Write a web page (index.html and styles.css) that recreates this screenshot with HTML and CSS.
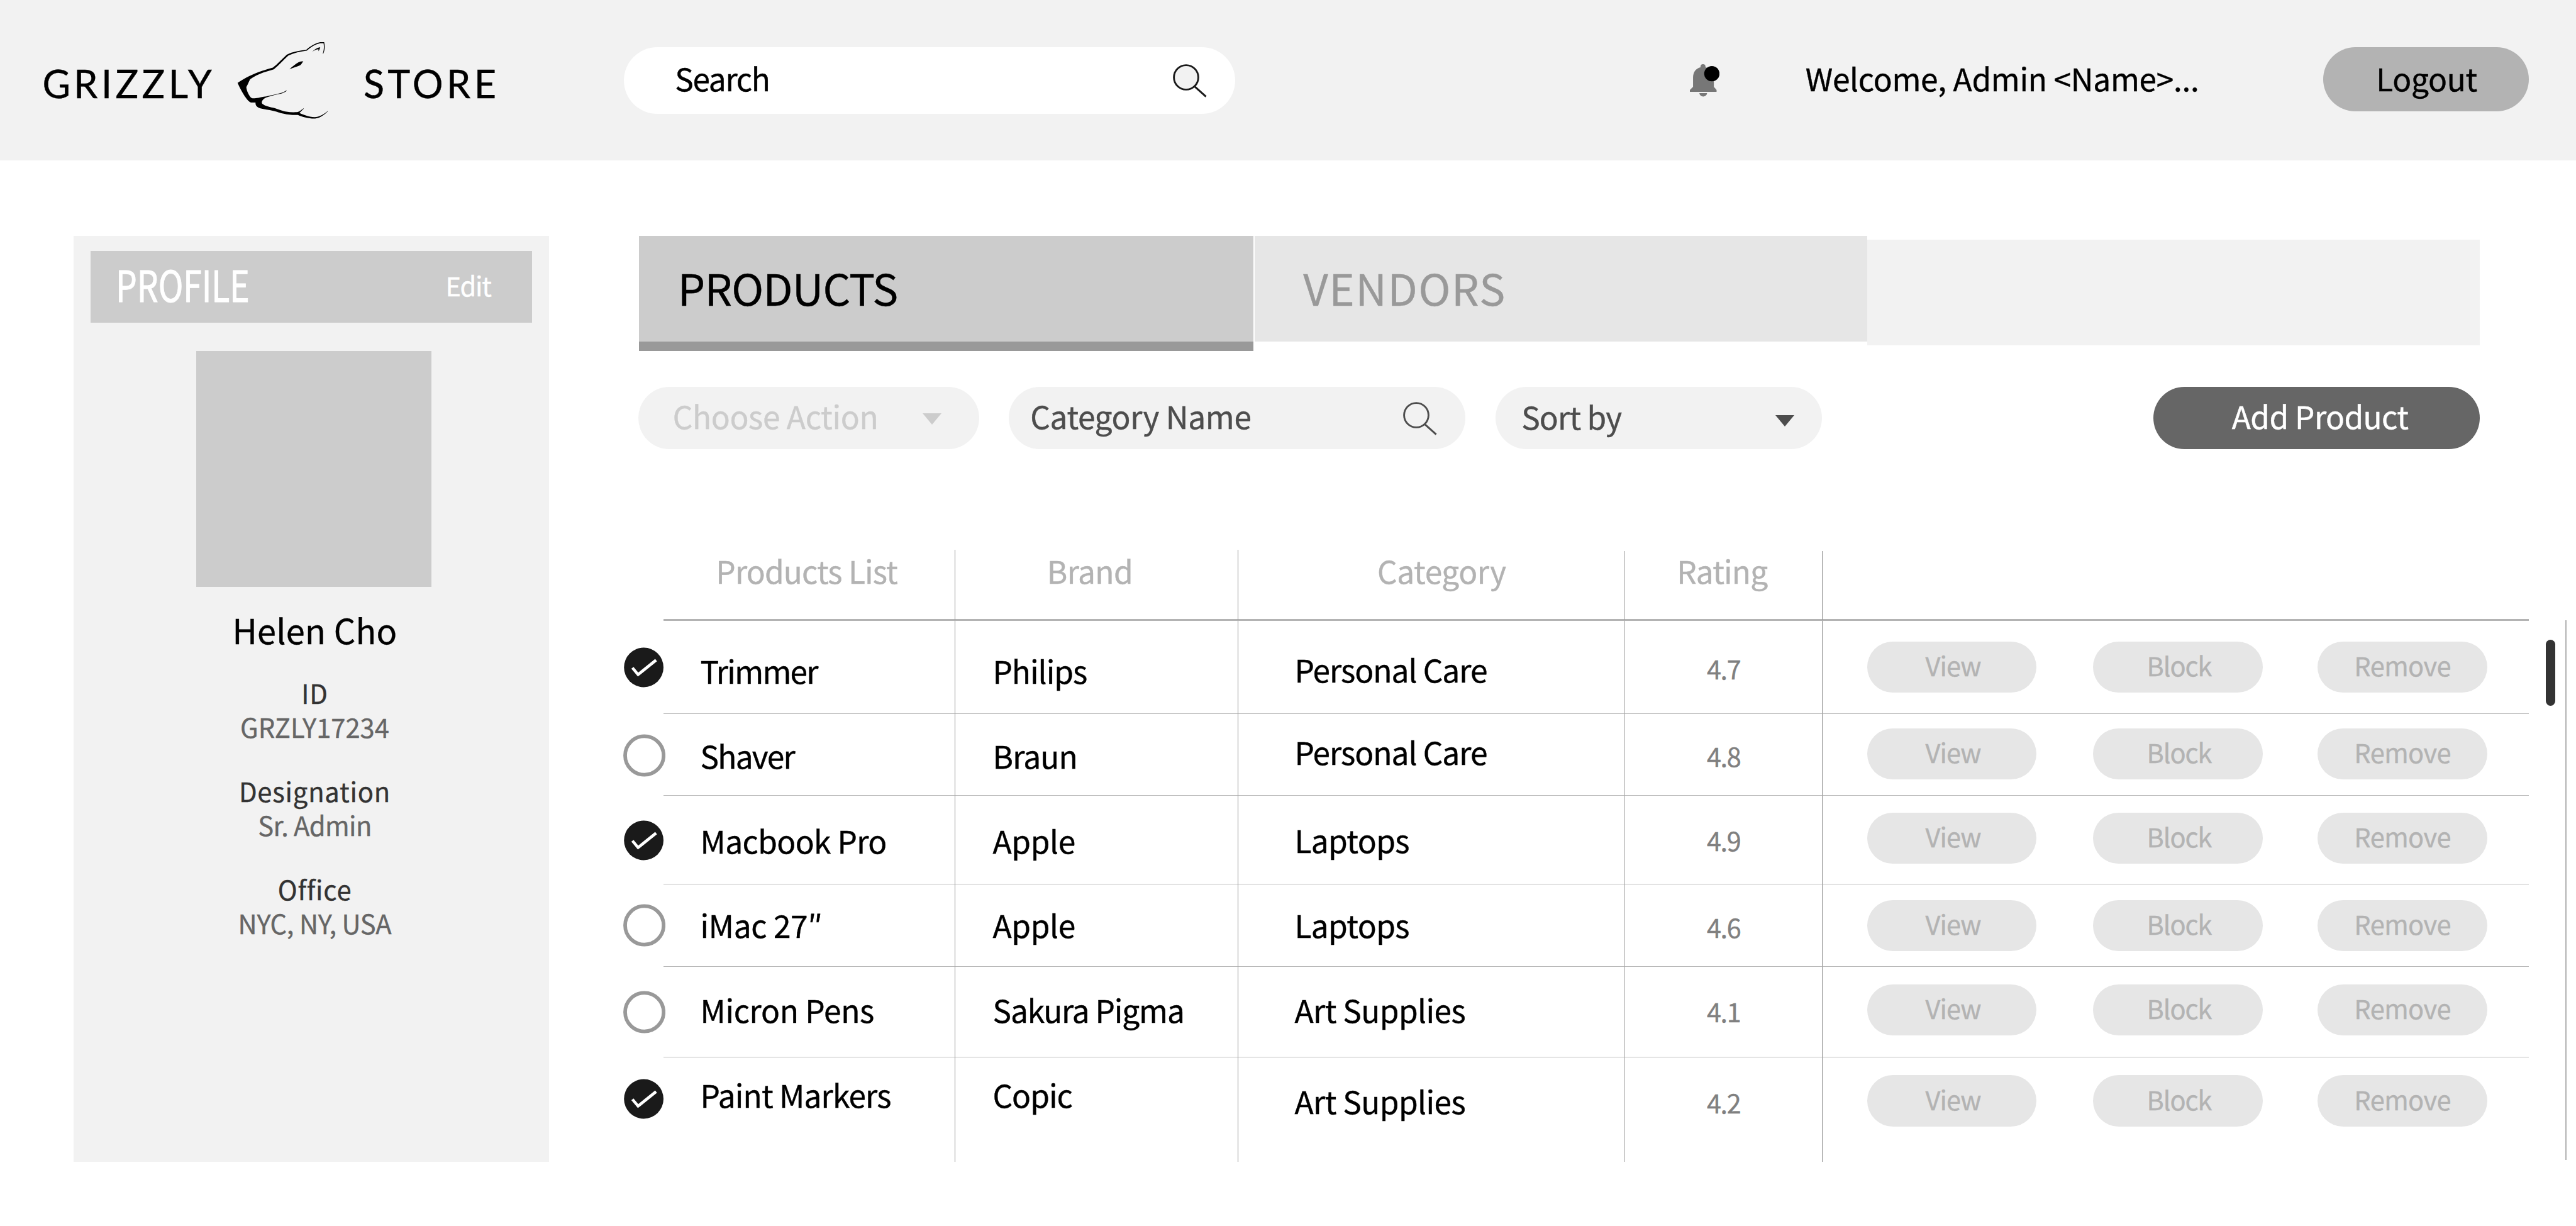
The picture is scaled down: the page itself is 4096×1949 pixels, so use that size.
FILE: index.html
```html
<!DOCTYPE html>
<html lang="en">
<head>
<meta charset="utf-8">
<title>Grizzly Store</title>
<link rel="stylesheet" href="styles.css">
</head>
<body>
<svg class="defs" width="0" height="0" aria-hidden="true">
  <symbol id="magnifier" viewBox="0 0 54 53">
    <circle cx="21" cy="21" r="19.4" stroke="currentColor" stroke-width="2.9"/>
    <path d="M33.6 34.6 52.6 51.6" stroke="currentColor" stroke-width="3" fill="none"/>
  </symbol>
  <symbol id="caret" viewBox="0 0 30 18"><path d="M0 0H30L15 18Z" fill="currentColor"/></symbol>
  <symbol id="checked" viewBox="0 0 68 68">
    <circle cx="33.6" cy="34" r="31.4" fill="#1a1a1a"/>
    <path d="M15.6 34.6 24.6 45.4 53.2 22.4" fill="none" stroke="#fff" stroke-width="4.6"/>
  </symbol>
  <symbol id="unchecked" viewBox="0 0 68 68">
    <circle cx="34.6" cy="34" r="30.6" fill="#fff" stroke="#999" stroke-width="5.8"/>
  </symbol>
</svg>

<header class="topbar">
  <div class="logo">
    <span class="logo-word logo-first">GRIZZLY</span>
    <svg class="bear" viewBox="0 0 780 630" aria-hidden="true">
      <path d="M74 341C120 310 180 280 235 262C262 252 290 246 308 240C340 214 372 180 400 154C440 134 485 127 529 122C556 97 590 78 622 71H648C654 98 653 122 642 148L639 147C647 122 648 99 644 78H622C592 84 562 101 533 127C490 133 448 142 411 159C380 187 348 222 314 251C292 258 268 264 245 272C215 284 180 299 157 317C147 336 143 350 132 368C133 392 149 424 162 438C168 444 180 444 195 442C222 439 240 432 265 430C300 424 335 415 366 407C380 402 388 396 398 391L400 393C390 401 378 408 368 411C332 418 285 429 255 442C232 458 230 474 241 482C258 494 278 500 298 503C330 508 360 524 398 532C420 536 445 536 470 535C487 531 497 520 511 510L513 512C502 521 494 532 484 540C510 553 545 566 585 568C622 566 650 545 670 528L672 530C648 554 620 576 588 577C545 578 505 567 474 553C450 556 410 552 380 545C350 540 335 530 310 526C280 520 250 517 225 510C200 500 192 490 193 471H163C150 467 135 448 122 430C102 400 88 372 74 341Z"/>
      <path d="M418 251C435 233 460 214 480 203C490 199 500 197 510 198C502 206 500 216 489 224C465 234 440 240 418 251Z"/>
      <path d="M568 137C582 120 600 108 622 104C619 114 616 123 611 131L610 118C593 119 580 127 568 137Z"/>
    </svg>
    <span class="logo-word logo-second">STORE</span>
  </div>
  <div class="search">
    <span class="search-text">Search</span>
    <svg class="magnifier on-white" aria-hidden="true"><use href="#magnifier"/></svg>
  </div>
  <svg class="bell" viewBox="3734 142 66 72" aria-hidden="true">
    <path fill="#777" d="M3734 203V199L3741 192V172C3741 159 3748 151 3757.5 149V147.500a5.500 5.500 0 0 1 11 0V149C3779 151 3787 159 3787 172V192L3793 199V203ZM3755 206H3772A8.500 7.500 0 0 1 3755 206Z"/>
    <circle cx="3782.600" cy="163" r="17"/>
  </svg>
  <span class="welcome">Welcome, Admin &lt;Name&gt;...</span>
  <button class="logout">Logout</button>
</header>

<div class="page">
  <aside class="profile">
    <div class="profile-bar">
      <span class="profile-title">PROFILE</span>
      <a class="profile-edit">Edit</a>
    </div>
    <div class="avatar"></div>
    <div class="profile-info">
      <h2 class="profile-name">Helen Cho</h2>
      <dl class="fact"><dt>ID</dt><dd class="ls-none">GRZLY17234</dd></dl>
      <dl class="fact"><dt>Designation</dt><dd class="ls-mid">Sr. Admin</dd></dl>
      <dl class="fact"><dt>Office</dt><dd class="ls-light">NYC, NY, USA</dd></dl>
    </div>
  </aside>

  <main class="main">
    <nav class="tabs">
      <a class="tab tab-active">PRODUCTS</a>
      <a class="tab tab-vendors">VENDORS</a>
      <span class="tab-rest"></span>
    </nav>

    <div class="filters">
      <div class="pill pill-action"><span class="ls-light">Choose Action</span><svg class="caret" aria-hidden="true"><use href="#caret"/></svg></div>
      <div class="pill pill-category"><span class="ls-light">Category Name</span><svg class="magnifier" aria-hidden="true"><use href="#magnifier"/></svg></div>
      <div class="pill pill-sort"><span>Sort by</span><svg class="caret" aria-hidden="true"><use href="#caret"/></svg></div>
      <button class="pill pill-add"><span class="ls-mid">Add Product</span></button>
    </div>

    <div class="list">
      <div class="table">
        <div class="row head">
          <div class="cell"><span>Products List</span></div>
          <div class="cell"><span class="ls-mid">Brand</span></div>
          <div class="cell low"><span class="ls-light">Category</span></div>
          <div class="cell low"><span>Rating</span></div>
          <div class="cell"></div>
        </div>

        <div class="row r1">
          <svg class="check" aria-hidden="true"><use href="#checked"/></svg>
          <div class="cell name"><span class="ls-tightest">Trimmer</span></div>
          <div class="cell brand"><span class="ls-tight">Philips</span></div>
          <div class="cell category"><span class="ls-tight">Personal Care</span></div>
          <div class="cell rating">4.7</div>
          <div class="cell actions"><button class="act view">View</button><button class="act block">Block</button><button class="act remove">Remove</button></div>
        </div>

        <div class="row r2">
          <svg class="check" aria-hidden="true"><use href="#unchecked"/></svg>
          <div class="cell name"><span class="ls-tightest">Shaver</span></div>
          <div class="cell brand"><span>Braun</span></div>
          <div class="cell category"><span class="ls-tight">Personal Care</span></div>
          <div class="cell rating">4.8</div>
          <div class="cell actions"><button class="act view">View</button><button class="act block">Block</button><button class="act remove">Remove</button></div>
        </div>

        <div class="row r3">
          <svg class="check" aria-hidden="true"><use href="#checked"/></svg>
          <div class="cell name"><span class="ls-mid">Macbook Pro</span></div>
          <div class="cell brand"><span class="ls-light">Apple</span></div>
          <div class="cell category"><span class="ls-mid">Laptops</span></div>
          <div class="cell rating">4.9</div>
          <div class="cell actions"><button class="act view">View</button><button class="act block">Block</button><button class="act remove">Remove</button></div>
        </div>

        <div class="row r4">
          <svg class="check" aria-hidden="true"><use href="#unchecked"/></svg>
          <div class="cell name"><span class="ls-light">iMac 27″</span></div>
          <div class="cell brand"><span class="ls-light">Apple</span></div>
          <div class="cell category"><span class="ls-mid">Laptops</span></div>
          <div class="cell rating">4.6</div>
          <div class="cell actions"><button class="act view">View</button><button class="act block">Block</button><button class="act remove">Remove</button></div>
        </div>

        <div class="row r5">
          <svg class="check" aria-hidden="true"><use href="#unchecked"/></svg>
          <div class="cell name"><span class="ls-light">Micron Pens</span></div>
          <div class="cell brand"><span class="ls-tighter">Sakura Pigma</span></div>
          <div class="cell category"><span class="ls-mid">Art Supplies</span></div>
          <div class="cell rating">4.1</div>
          <div class="cell actions"><button class="act view">View</button><button class="act block">Block</button><button class="act remove">Remove</button></div>
        </div>

        <div class="row r6">
          <svg class="check" aria-hidden="true"><use href="#checked"/></svg>
          <div class="cell name"><span>Paint Markers</span></div>
          <div class="cell brand"><span class="ls-tight">Copic</span></div>
          <div class="cell category"><span class="ls-mid">Art Supplies</span></div>
          <div class="cell rating">4.2</div>
          <div class="cell actions"><button class="act view">View</button><button class="act block">Block</button><button class="act remove">Remove</button></div>
        </div>
      </div>
      <div class="scrollbar"><span class="thumb"></span></div>
    </div>
  </main>
</div>
</body>
</html>
```
FILE: styles.css
```css
* { box-sizing: border-box; margin: 0; padding: 0; }

body {
  width: 4096px;
  height: 1949px;
  overflow: hidden;
  background: #fff;
  color: #000;
  font: 49.6px/60px "Noto Sans CJK SC", "Noto Sans", sans-serif;
  letter-spacing: -0.85px;
  white-space: nowrap;
  -webkit-text-stroke: 0.4px currentColor;
}

button { border: 0; font: inherit; letter-spacing: inherit; text-align: left; color: inherit; }
svg { display: block; flex: none; }
.defs { position: absolute; }

/* tracking steps */
.ls-none { letter-spacing: 0; }
.ls-light { letter-spacing: -0.35px; }
.ls-mid { letter-spacing: -0.6px; }
.ls-tight { letter-spacing: -1px; }
.ls-tighter { letter-spacing: -1.15px; }
.ls-tightest { letter-spacing: -1.75px; }

/* top bar */
.topbar {
  display: flex;
  align-items: flex-start;
  height: 255px;
  padding-left: 67.4px;
  background: #f2f2f2;
}
.logo { display: flex; align-items: flex-start; width: 924.6px; }
.logo-word {
  padding-top: 95.5px;
  font: 61px/74px Lato, sans-serif;
  letter-spacing: 5.4px;
}
.logo-first { width: 292.4px; }
.logo-second { margin-left: 31px; }
.bear { width: 187.1px; height: 151.1px; margin-top: 50.4px; }
.search {
  display: flex;
  justify-content: space-between;
  width: 972px;
  height: 105.3px;
  margin-top: 75.3px;
  padding: 18px 45px 0 81.2px;
  border-radius: 53px;
  background: #fff;
}
.search-text { letter-spacing: -1.3px; }
.magnifier { width: 54px; height: 53px; color: #4d4d4d; fill: none; }
.on-white { margin-top: 9px; color: #1a1a1a; fill: #f2f2f2; }
.bell { width: 47.5px; height: 51.8px; margin: 102.2px 0 0 723px; }
.welcome { width: 823.3px; margin: 93.3px 0 0 136.2px; letter-spacing: -0.3px; }
.logout {
  width: 326.7px;
  height: 102.7px;
  margin-top: 74.8px;
  padding: 0 0 6px 84.4px;
  border-radius: 52px;
  background: #b3b3b3;
  letter-spacing: -0.3px;
}

.page { display: flex; align-items: flex-start; }

/* profile card */
.profile {
  width: 755.2px;
  height: 1471.8px;
  margin: 120.4px 0 0 117.4px;
  padding: 23.9px 26.8px 0;
  background: #f2f2f2;
}
.profile-bar {
  display: flex;
  align-items: flex-start;
  height: 113.8px;
  background: #ccc;
  color: #fff;
}
.profile-title {
  width: 524.7px;
  margin: 1.6px 0 0 39.7px;
  font-size: 68.5px;
  line-height: 100px;
  letter-spacing: 0;
  transform: scaleX(0.779);
  transform-origin: left;
  -webkit-text-stroke-width: 1px;
}
.profile-edit { margin-top: 29px; font-size: 41.6px; line-height: 50px; letter-spacing: -1.2px; }
.avatar { width: 374.6px; height: 374.5px; margin: 45px 0 0 167.6px; background: #ccc; }
.profile-info { padding-left: 11px; text-align: center; font-size: 41.7px; line-height: 54.3px; }
.profile-name {
  margin: 38.3px 0 42.8px;
  font-size: 54px;
  font-weight: 400;
  line-height: 60px;
  letter-spacing: 0.3px;
}
.fact { margin-bottom: 47.4px; }
.fact dt { color: #333; letter-spacing: 0.8px; }
.fact dd { color: #666; }

/* tabs */
.main { margin-left: 112.4px; padding-top: 119.8px; }
.tabs { display: flex; align-items: flex-start; height: 239.9px; padding-left: 30.9px; }
.tab { padding-top: 31.5px; font-size: 68.7px; line-height: 100px; }
.tab-active {
  width: 977.3px;
  height: 183.7px;
  padding-left: 62px;
  border-bottom: 15.7px solid #999;
  background: #ccc;
}
.tab-vendors {
  width: 973.5px;
  height: 168px;
  margin-left: 2px;
  padding-left: 77px;
  background: #e6e6e6;
  color: #999;
  letter-spacing: 1.6px;
}
.tab-rest { width: 974.3px; height: 168px; margin-top: 6.1px; background: #f2f2f2; }

/* filters */
.filters { display: flex; align-items: flex-start; height: 259.3px; padding-left: 30px; }
.pill {
  display: flex;
  align-items: flex-start;
  justify-content: space-between;
  height: 99.2px;
  padding-top: 15.3px;
  border-radius: 50px;
  background: #f2f2f2;
  color: #4d4d4d;
}
.caret { width: 30px; height: 18px; margin-top: 27px; }
.pill .magnifier { margin-top: 9px; }
.pill-action { width: 542.5px; padding-left: 54.7px; padding-right: 60px; color: #ccc; }
.pill-category { width: 726px; margin-left: 46.8px; padding-left: 34px; padding-right: 45px; }
.pill-sort { width: 519.1px; margin-left: 47.5px; padding: 16.6px 44px 0 41.4px; }
.pill-sort .caret { margin-top: 28.4px; }
.pill-add { width: 519.2px; margin-left: 526.9px; padding-left: 125px; background: #666; color: #fff; }

/* product list */
.list { display: flex; align-items: flex-start; }
.table { width: 3036px; }
.row {
  display: grid;
  grid-template-columns: 70px 464px 450px 614px 315px 1123px;
  height: var(--h);
}
.cell { border-right: 1px solid #8c8c8c; border-bottom: 1px solid #b8b8b8; }
.cell:last-child { border-right: 0; }
.r6 .cell { border-bottom: 0; }

.head { --h: 113px; color: #b3b3b3; }
.head .cell { padding-top: 2.2px; border-bottom: 3px solid #b3b3b3; }
.head .cell:first-child { grid-column: 2; padding-left: 83.4px; }
.head .cell:nth-child(2) { padding-left: 145.8px; }
.head .low { margin-top: 2px; padding: 0.2px 0 0 221px; }
.head .low + .low { padding-left: 83.4px; }

.r1 { --h: 148px; --check: 39.6px; --name: 48.4px; --cat: 45.8px; --rate: 50.5px; --btn: 32.8px; }
.r2 { --h: 130px; --check: 31.8px; --name: 34.9px; --cat: 29.4px; --rate: 41.3px; --btn: 22.6px; }
.r3 { --h: 141px; --check: 37.1px; --name: 39.7px; --cat: 39.5px; --rate: 44.9px; --btn: 27.4px; }
.r4 { --h: 131px; --check: 31.1px; --name: 33.5px; --cat: 33.5px; --rate: 42px; --btn: 24.8px; }
.r5 { --h: 144px; --check: 38px; --name: 37.2px; --cat: 37.4px; --rate: 45.3px; --btn: 28px; }
.r6 { --h: 166px; --check: 32.3px; --name: 28.4px; --cat: 37.9px; --rate: 45.8px; --btn: 28.5px; }

.check { width: 68px; height: 68px; margin: var(--check) 0 0 5.2px; }
.name { padding: var(--name) 0 0 58.5px; }
.brand { padding: var(--name) 0 0 59.5px; }
.category { padding: var(--cat) 0 0 89.5px; }
.rating {
  padding: var(--rate) 0 0 131px;
  color: #808080;
  font-size: 41.4px;
  line-height: 50px;
  letter-spacing: -1.4px;
}
.actions {
  display: flex;
  align-items: flex-start;
  padding: var(--btn) 0 0 70.7px;
}
.act {
  width: 269.8px;
  height: 81.1px;
  padding-bottom: 7px;
  border-radius: 41px;
  background: #e6e6e6;
  color: #b3b3b3;
  font-size: 41.5px;
  line-height: 50px;
  text-align: center;
}
.view { padding-left: 4px; }
.block { margin: 0 87.4px 0 89.6px; padding-left: 4px; letter-spacing: -1.1px; }
.remove { letter-spacing: -0.5px; }

.scrollbar {
  width: 33px;
  height: 858px;
  margin: 112.4px 0 0 26.8px;
  padding-top: 30.4px;
  border-right: 2px solid #b3b3b3;
}
.thumb { display: block; width: 15px; height: 105.6px; border-radius: 8px; background: #333; }
```
